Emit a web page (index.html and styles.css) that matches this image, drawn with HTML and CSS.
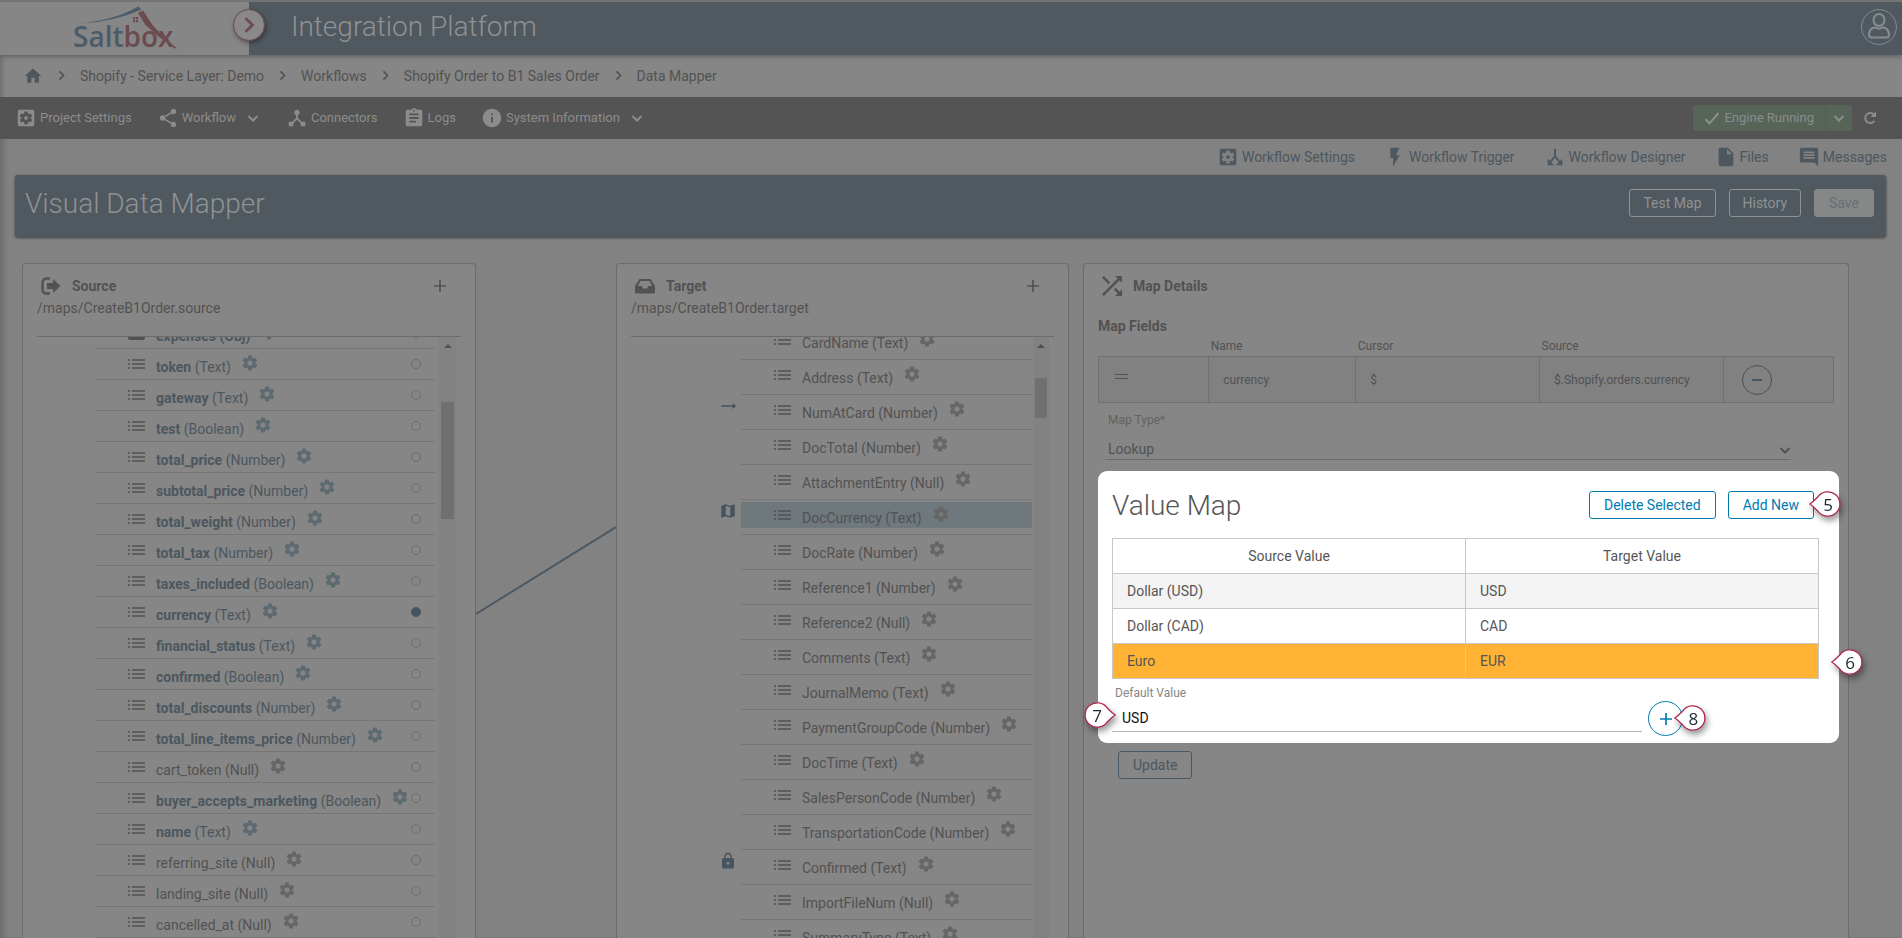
FILE: index.html
```html
<!DOCTYPE html>
<html lang="en">
<head>
    <meta charset="UTF-8">
    <meta name="viewport" content="width=device-width, initial-scale=1.0">
    <title>Saltbox - Visual Data Mapper</title>
    <link rel="stylesheet" href="styles.css">
</head>
<body>
    <!-- icon sprite -->
    <svg class="sprite" aria-hidden="true">
        <symbol id="home" viewBox="0 0 24 24"><path d="M10 20v-6h4v6h5v-8h3L12 3 2 12h3v8z"/></symbol>
        <symbol id="right" viewBox="0 0 16 16"><path d="M5.500 3l5 5-5 5" fill="none" stroke="currentColor" stroke-width="2"/></symbol>
        <symbol id="down" viewBox="0 0 16 16"><path d="M3.500 6L8 10.500 12.500 6" fill="none" stroke="currentColor" stroke-width="2"/></symbol>
        <symbol id="settings-box" viewBox="0 0 24 24"><path d="M12 10c-1.100 0-2 .9-2 2s.9 2 2 2 2-.9 2-2-.9-2-2-2zm7-7H5c-1.110 0-2 .9-2 2v14c0 1.100.89 2 2 2h14c1.110 0 2-.9 2-2V5c0-1.100-.89-2-2-2zm-1.750 9c0 .23-.02.46-.05.68l1.480 1.160c.13.11.17.3.08.45l-1.400 2.420c-.09.15-.27.21-.43.15l-1.740-.7c-.36.28-.76.51-1.180.69l-.26 1.850c-.03.17-.18.3-.35.3h-2.800c-.17 0-.32-.13-.35-.29l-.26-1.850c-.43-.18-.82-.41-1.180-.69l-1.740.7c-.16.06-.34 0-.43-.15l-1.400-2.420c-.09-.15-.05-.34.08-.45l1.480-1.160c-.03-.23-.05-.46-.05-.69 0-.23.02-.46.05-.68l-1.480-1.160c-.13-.11-.17-.3-.08-.45l1.400-2.420c.09-.15.27-.21.43-.15l1.740.7c.36-.28.76-.51 1.180-.69l.26-1.850c.03-.17.18-.3.35-.3h2.800c.17 0 .32.13.35.29l.26 1.850c.43.18.82.41 1.180.69l1.740-.7c.16-.06.34 0 .43.15l1.400 2.420c.09.15.05.34-.08.45l-1.480 1.160c.03.23.05.46.05.69z"/></symbol>
        <symbol id="share" viewBox="0 0 24 24"><path d="M18 16.080c-.76 0-1.440.3-1.960.77L8.910 12.700c.05-.23.09-.46.09-.7s-.04-.47-.09-.7l7.050-4.110c.54.5 1.250.81 2.040.81 1.660 0 3-1.340 3-3s-1.340-3-3-3-3 1.340-3 3c0 .24.04.47.09.7L8.040 9.810C7.500 9.310 6.790 9 6 9c-1.660 0-3 1.340-3 3s1.340 3 3 3c.79 0 1.500-.31 2.040-.81l7.120 4.160c-.05.21-.08.43-.08.65 0 1.610 1.310 2.920 2.920 2.920s2.920-1.310 2.920-2.920-1.310-2.920-2.920-2.920z"/></symbol>
        <symbol id="hub" viewBox="0 0 24 24"><path d="M17 16l-4-4V8.820C14.160 8.400 15 7.300 15 6c0-1.660-1.340-3-3-3S9 4.340 9 6c0 1.300.84 2.400 2 2.820V12l-4 4H3v5h5v-3.050l4-4.200 4 4.200V21h5v-5h-4z"/></symbol>
        <symbol id="clipboard" viewBox="0 0 24 24"><path d="M19 3h-4.180C14.400 1.840 13.300 1 12 1c-1.300 0-2.400.84-2.820 2H5c-1.100 0-2 .9-2 2v14c0 1.100.9 2 2 2h14c1.100 0 2-.9 2-2V5c0-1.100-.9-2-2-2zm-7 0c.55 0 1 .45 1 1s-.45 1-1 1-1-.45-1-1 .45-1 1-1zm2 14H7v-2h7v2zm3-4H7v-2h10v2zm0-4H7V7h10v2z"/></symbol>
        <symbol id="info" viewBox="0 0 24 24"><path d="M12 2C6.480 2 2 6.480 2 12s4.480 10 10 10 10-4.480 10-10S17.520 2 12 2zm1 15h-2v-6h2v6zm0-8h-2V7h2v2z"/></symbol>
        <symbol id="check" viewBox="0 0 16 16"><path d="M1.500 9l4 4.500L14.500 3" fill="none" stroke="currentColor" stroke-width="2"/></symbol>
        <symbol id="refresh" viewBox="0 0 16 16"><path d="M12.300 11A5 5 0 1 1 12 4.800" fill="none" stroke="currentColor" stroke-width="2"/><path d="M14 1.500v5.500H8.500z"/></symbol>
        <symbol id="flash" viewBox="0 0 24 24"><path d="M7 2v11h3v9l7-12h-4l4-8z"/></symbol>
        <symbol id="split" viewBox="0 0 24 24"><path d="M12 3v8L6 18.500M12 11l6 7.500" fill="none" stroke="currentColor" stroke-width="2"/><path d="M4 14v7h7zM20 14v7h-7z"/></symbol>
        <symbol id="file" viewBox="0 0 24 24"><path d="M6 2c-1.100 0-2 .9-2 2v16c0 1.100.9 2 2 2h12c1.100 0 2-.9 2-2V8l-6-6H6zm7 7V3.500L18.500 9H13z"/></symbol>
        <symbol id="message" viewBox="0 0 24 24"><path d="M22 4c0-1.100-.9-2-2-2H4c-1.100 0-2 .9-2 2v12c0 1.100.9 2 2 2h14l4 4V4zM18 14H6v-2h12v2zm0-3H6V9h12v2zm0-3H6V6h12v2z"/></symbol>
        <symbol id="user" viewBox="0 0 36 36"><g fill="none" stroke="currentColor"><circle cx="18" cy="18" r="17.400"/><g stroke-width="2"><ellipse cx="18" cy="11" rx="5.500" ry="6"/><path d="M11 19.500c2-1 3-1 3.500-.8 2 1.100 5 1.100 7 0 1-.4 2 0 3.500.8 2.300 1.500 3 4 3 6 0 1.800-.8 3-2.500 3h-15C8.800 28.500 8 27.300 8 25.500c0-2 .7-4.500 3-6z"/></g></g></symbol>
        <symbol id="sign-out" viewBox="0 0 20 18"><path d="M9 1.500H5.500a4 4 0 0 0-4 4v7a4 4 0 0 0 4 4H9" fill="none" stroke="currentColor" stroke-width="2.400"/><path d="M12 2l7.500 7-7.500 7v-4H6V6h6z"/></symbol>
        <symbol id="inbox" viewBox="0 0 20 16"><path d="M4.500 1h11L20 8v6q0 1.500-1.500 1.500h-17Q0 15.500 0 14V8zM5.500 3L2.800 8H6.500l1.500 2.500h4L13.500 8h3.700L14.500 3z"/></symbol>
        <symbol id="shuffle" viewBox="4 4 16 16"><path d="M10.590 9.170L5.410 4 4 5.410l5.170 5.170 1.420-1.410zM14.500 4l2.040 2.040L4 18.590 5.410 20 17.960 7.460 20 9.500V4h-5.500zm.33 9.410l-1.410 1.410 3.130 3.130L14.500 20H20v-5.500l-2.040 2.040-3.130-3.130z"/></symbol>
        <symbol id="plus" viewBox="0 0 14 14"><path d="M7 1v12M1 7h12" stroke="currentColor" stroke-width="1.700"/></symbol>
        <symbol id="minus" viewBox="0 0 14 14"><path d="M2 7h10" stroke="currentColor" stroke-width="2"/></symbol>
        <symbol id="list" viewBox="0 0 17 10"><path d="M0 1h2M0 5h2M0 9h2M4 1h13M4 5h13M4 9h13" stroke="currentColor" stroke-width="1.700"/></symbol>
        <symbol id="folder" viewBox="0 0 17 14"><path d="M0 2q0-2 2-2h4l2 2h7q2 0 2 2v8q0 2-2 2H2q-2 0-2-2z"/></symbol>
        <symbol id="gear" viewBox="0 0 24 24"><path d="M19.430 12.980c.04-.32.07-.64.07-.98s-.03-.66-.07-.98l2.110-1.650c.19-.15.24-.42.12-.64l-2-3.460c-.12-.22-.39-.3-.61-.22l-2.490 1c-.52-.4-1.080-.73-1.690-.98l-.38-2.650C14.460 2.180 14.250 2 14 2h-4c-.25 0-.46.18-.49.42l-.38 2.650c-.61.25-1.170.59-1.690.98l-2.490-1c-.23-.09-.49 0-.61.22l-2 3.460c-.13.22-.07.49.12.64l2.110 1.650c-.04.32-.07.65-.07.98s.03.66.07.98l-2.110 1.650c-.19.15-.24.42-.12.64l2 3.460c.12.22.39.3.61.22l2.490-1c.52.4 1.080.73 1.690.98l.38 2.650c.03.24.24.42.49.42h4c.25 0 .46-.18.49-.42l.38-2.650c.61-.25 1.170-.59 1.690-.98l2.490 1c.23.09.49 0 .61-.22l2-3.460c.12-.22.07-.49-.12-.64l-2.110-1.650zM12 15.500c-1.930 0-3.500-1.570-3.500-3.500s1.570-3.500 3.500-3.500 3.500 1.570 3.500 3.500-1.570 3.500-3.500 3.500z"/></symbol>
        <symbol id="arrow" viewBox="0 0 24 24"><path d="M23 12l-5-4v3H3v2h15v3z"/></symbol>
        <symbol id="map" viewBox="0 0 24 24"><path d="M20.500 3l-.16.03L15 5.100 9 3 3.360 4.900c-.21.07-.36.25-.36.48V20.500c0 .28.22.5.5.5l.16-.03L9 18.900l6 2.100 5.640-1.900c.21-.07.36-.25.36-.48V3.500c0-.28-.22-.5-.5-.5zM15 19l-6-2.110V5l6 2.110V19z"/></symbol>
        <symbol id="lock" viewBox="0 0 24 24"><path d="M18 8h-1V6c0-2.760-2.240-5-5-5S7 3.240 7 6v2H6c-1.100 0-2 .9-2 2v10c0 1.100.9 2 2 2h12c1.100 0 2-.9 2-2V10c0-1.100-.9-2-2-2zm-6 9c-1.100 0-2-.9-2-2s.9-2 2-2 2 .9 2 2-.9 2-2 2zm3.100-9H8.900V6c0-1.710 1.390-3.100 3.100-3.100 1.710 0 3.100 1.390 3.100 3.100v2z"/></symbol>
        <symbol id="pin" viewBox="0 0 32 26"><path d="M.8 13C4 11 6 9 8.500 6.300a12.200 12.200 0 1 1 0 13.400C6 17 4 15 .8 13z" fill="#fff" stroke="#b0294f" stroke-width="1.300"/></symbol>
    </svg>

    <header class="header">
        <div class="logo">
            <svg class="logo-art" viewBox="0 0 110 52" role="img" aria-label="Saltbox">
                <path class="logo-blue" d="M6 20.500C28 19 50 13 66 3.500l3.500 3C50 15 28 20 6 20.500z"/>
                <path class="logo-red" d="M66 10l5-2.500 9.500 14.500 11 12 13 11-2 .5-16-12L73.500 22z"/>
                <path class="logo-red" d="M61 14h2.200v2.200H61zM64 14h2.200v2.200H64zM61 17h2.200v2.200H61zM64 17h2.200v2.200H64z"/>
                <text x="1" y="44"><tspan class="logo-blue">Salt</tspan><tspan class="logo-red">box</tspan></text>
            </svg>
            <button class="expand-btn" aria-label="Expand menu"><svg><use href="#right"/></svg></button>
        </div>
        <div class="header-bar">
            <h1>Integration Platform</h1>
            <button class="user-btn" aria-label="Account"><svg><use href="#user"/></svg></button>
        </div>
    </header>

    <div class="page">
        <nav class="breadcrumb">
            <a href="#" aria-label="Home"><svg class="home"><use href="#home"/></svg></a>
            <svg class="sep"><use href="#right"/></svg>
            <a href="#">Shopify - Service Layer: Demo</a>
            <svg class="sep"><use href="#right"/></svg>
            <a href="#">Workflows</a>
            <svg class="sep"><use href="#right"/></svg>
            <a href="#">Shopify Order to B1 Sales Order</a>
            <svg class="sep"><use href="#right"/></svg>
            <a href="#">Data Mapper</a>
        </nav>

        <nav class="toolbar">
            <a href="#"><svg><use href="#settings-box"/></svg>Project Settings</a>
            <a href="#"><svg><use href="#share"/></svg>Workflow<svg class="caret"><use href="#down"/></svg></a>
            <a href="#"><svg><use href="#hub"/></svg>Connectors</a>
            <a href="#"><svg><use href="#clipboard"/></svg>Logs</a>
            <a href="#"><svg><use href="#info"/></svg>System Information<svg class="caret"><use href="#down"/></svg></a>
            <div class="engine">
                <button class="engine-main"><svg><use href="#check"/></svg>Engine Running</button>
                <button class="engine-more" aria-label="Engine options"><svg><use href="#down"/></svg></button>
            </div>
            <button class="refresh-btn" aria-label="Refresh"><svg><use href="#refresh"/></svg></button>
        </nav>

        <nav class="submenu">
            <a href="#"><svg><use href="#settings-box"/></svg>Workflow Settings</a>
            <a href="#"><svg><use href="#flash"/></svg>Workflow Trigger</a>
            <a href="#"><svg><use href="#split"/></svg>Workflow Designer</a>
            <a href="#"><svg><use href="#file"/></svg>Files</a>
            <a href="#"><svg><use href="#message"/></svg>Messages</a>
        </nav>

        <div class="title-bar">
            <h2>Visual Data Mapper</h2>
            <button class="btn btn-light">Test Map</button>
            <button class="btn btn-light">History</button>
            <button class="btn btn-save">Save</button>
        </div>

        <main class="mapper">
            <section class="panel source">
                <div class="panel-head">
                    <div class="panel-title">
                        <svg><use href="#sign-out"/></svg><h3>Source</h3>
                        <button class="add-btn" aria-label="Add source"><svg><use href="#plus"/></svg></button>
                    </div>
                    <p>/maps/CreateB1Order.source</p>
                </div>
                <div class="tree">
                    <ul>
                        <li><div class="node mapped"><i class="twisty"></i><svg class="folder"><use href="#folder"/></svg><span><b>expenses (Obj)</b></span><svg class="gear"><use href="#gear"/></svg><input type="radio" name="port" aria-label="expenses"></div></li>
                        <li><div class="node mapped"><svg class="list"><use href="#list"/></svg><span><b>token</b> (Text)</span><svg class="gear"><use href="#gear"/></svg><input type="radio" name="port" aria-label="token"></div></li>
                        <li><div class="node mapped"><svg class="list"><use href="#list"/></svg><span><b>gateway</b> (Text)</span><svg class="gear"><use href="#gear"/></svg><input type="radio" name="port" aria-label="gateway"></div></li>
                        <li><div class="node mapped"><svg class="list"><use href="#list"/></svg><span><b>test</b> (Boolean)</span><svg class="gear"><use href="#gear"/></svg><input type="radio" name="port" aria-label="test"></div></li>
                        <li><div class="node mapped"><svg class="list"><use href="#list"/></svg><span><b>total_price</b> (Number)</span><svg class="gear"><use href="#gear"/></svg><input type="radio" name="port" aria-label="total_price"></div></li>
                        <li><div class="node mapped"><svg class="list"><use href="#list"/></svg><span><b>subtotal_price</b> (Number)</span><svg class="gear"><use href="#gear"/></svg><input type="radio" name="port" aria-label="subtotal_price"></div></li>
                        <li><div class="node mapped"><svg class="list"><use href="#list"/></svg><span><b>total_weight</b> (Number)</span><svg class="gear"><use href="#gear"/></svg><input type="radio" name="port" aria-label="total_weight"></div></li>
                        <li><div class="node mapped"><svg class="list"><use href="#list"/></svg><span><b>total_tax</b> (Number)</span><svg class="gear"><use href="#gear"/></svg><input type="radio" name="port" aria-label="total_tax"></div></li>
                        <li><div class="node mapped"><svg class="list"><use href="#list"/></svg><span><b>taxes_included</b> (Boolean)</span><svg class="gear"><use href="#gear"/></svg><input type="radio" name="port" aria-label="taxes_included"></div></li>
                        <li><div class="node mapped"><svg class="list"><use href="#list"/></svg><span><b>currency</b> (Text)</span><svg class="gear"><use href="#gear"/></svg><input type="radio" name="port" aria-label="currency" checked></div></li>
                        <li><div class="node mapped"><svg class="list"><use href="#list"/></svg><span><b>financial_status</b> (Text)</span><svg class="gear"><use href="#gear"/></svg><input type="radio" name="port" aria-label="financial_status"></div></li>
                        <li><div class="node mapped"><svg class="list"><use href="#list"/></svg><span><b>confirmed</b> (Boolean)</span><svg class="gear"><use href="#gear"/></svg><input type="radio" name="port" aria-label="confirmed"></div></li>
                        <li><div class="node mapped"><svg class="list"><use href="#list"/></svg><span><b>total_discounts</b> (Number)</span><svg class="gear"><use href="#gear"/></svg><input type="radio" name="port" aria-label="total_discounts"></div></li>
                        <li><div class="node mapped"><svg class="list"><use href="#list"/></svg><span><b>total_line_items_price</b> (Number)</span><svg class="gear"><use href="#gear"/></svg><input type="radio" name="port" aria-label="total_line_items_price"></div></li>
                        <li><div class="node"><svg class="list"><use href="#list"/></svg><span>cart_token (Null)</span><svg class="gear"><use href="#gear"/></svg><input type="radio" name="port" aria-label="cart_token"></div></li>
                        <li><div class="node mapped"><svg class="list"><use href="#list"/></svg><span><b>buyer_accepts_marketing</b> (Boolean)</span><svg class="gear"><use href="#gear"/></svg><input type="radio" name="port" aria-label="buyer_accepts_marketing"></div></li>
                        <li><div class="node mapped"><svg class="list"><use href="#list"/></svg><span><b>name</b> (Text)</span><svg class="gear"><use href="#gear"/></svg><input type="radio" name="port" aria-label="name"></div></li>
                        <li><div class="node"><svg class="list"><use href="#list"/></svg><span>referring_site (Null)</span><svg class="gear"><use href="#gear"/></svg><input type="radio" name="port" aria-label="referring_site"></div></li>
                        <li><div class="node"><svg class="list"><use href="#list"/></svg><span>landing_site (Null)</span><svg class="gear"><use href="#gear"/></svg><input type="radio" name="port" aria-label="landing_site"></div></li>
                        <li><div class="node"><svg class="list"><use href="#list"/></svg><span>cancelled_at (Null)</span><svg class="gear"><use href="#gear"/></svg><input type="radio" name="port" aria-label="cancelled_at"></div></li>
                    </ul>
                    <div class="scrollbar"><i class="scroll-up"></i><div class="thumb"></div></div>
                </div>
            </section>

            <!-- line from currency to DocCurrency -->
            <svg class="connector" viewBox="0 0 140 360" preserveAspectRatio="none"><path d="M0 351L140 264"/></svg>

            <section class="panel target">
                <div class="panel-head">
                    <div class="panel-title">
                        <svg><use href="#inbox"/></svg><h3>Target</h3>
                        <button class="add-btn" aria-label="Add target"><svg><use href="#plus"/></svg></button>
                    </div>
                    <p>/maps/CreateB1Order.target</p>
                </div>
                <div class="tree">
                    <ul>
                        <li><div class="node"><svg class="list"><use href="#list"/></svg><span>CardName (Text)</span><svg class="gear"><use href="#gear"/></svg></div></li>
                        <li><div class="node"><svg class="list"><use href="#list"/></svg><span>Address (Text)</span><svg class="gear"><use href="#gear"/></svg></div></li>
                        <li><svg class="kind"><use href="#arrow"/></svg><div class="node"><svg class="list"><use href="#list"/></svg><span>NumAtCard (Number)</span><svg class="gear"><use href="#gear"/></svg></div></li>
                        <li><div class="node"><svg class="list"><use href="#list"/></svg><span>DocTotal (Number)</span><svg class="gear"><use href="#gear"/></svg></div></li>
                        <li><div class="node"><svg class="list"><use href="#list"/></svg><span>AttachmentEntry (Null)</span><svg class="gear"><use href="#gear"/></svg></div></li>
                        <li><svg class="kind"><use href="#map"/></svg><div class="node selected"><svg class="list"><use href="#list"/></svg><span>DocCurrency (Text)</span><svg class="gear"><use href="#gear"/></svg></div></li>
                        <li><div class="node"><svg class="list"><use href="#list"/></svg><span>DocRate (Number)</span><svg class="gear"><use href="#gear"/></svg></div></li>
                        <li><div class="node"><svg class="list"><use href="#list"/></svg><span>Reference1 (Number)</span><svg class="gear"><use href="#gear"/></svg></div></li>
                        <li><div class="node"><svg class="list"><use href="#list"/></svg><span>Reference2 (Null)</span><svg class="gear"><use href="#gear"/></svg></div></li>
                        <li><div class="node"><svg class="list"><use href="#list"/></svg><span>Comments (Text)</span><svg class="gear"><use href="#gear"/></svg></div></li>
                        <li><div class="node"><svg class="list"><use href="#list"/></svg><span>JournalMemo (Text)</span><svg class="gear"><use href="#gear"/></svg></div></li>
                        <li><div class="node"><svg class="list"><use href="#list"/></svg><span>PaymentGroupCode (Number)</span><svg class="gear"><use href="#gear"/></svg></div></li>
                        <li><div class="node"><svg class="list"><use href="#list"/></svg><span>DocTime (Text)</span><svg class="gear"><use href="#gear"/></svg></div></li>
                        <li><div class="node"><svg class="list"><use href="#list"/></svg><span>SalesPersonCode (Number)</span><svg class="gear"><use href="#gear"/></svg></div></li>
                        <li><div class="node"><svg class="list"><use href="#list"/></svg><span>TransportationCode (Number)</span><svg class="gear"><use href="#gear"/></svg></div></li>
                        <li><svg class="kind"><use href="#lock"/></svg><div class="node"><svg class="list"><use href="#list"/></svg><span>Confirmed (Text)</span><svg class="gear"><use href="#gear"/></svg></div></li>
                        <li><div class="node"><svg class="list"><use href="#list"/></svg><span>ImportFileNum (Null)</span><svg class="gear"><use href="#gear"/></svg></div></li>
                        <li><div class="node"><svg class="list"><use href="#list"/></svg><span>SummaryType (Text)</span><svg class="gear"><use href="#gear"/></svg></div></li>
                    </ul>
                    <div class="scrollbar"><i class="scroll-up"></i><div class="thumb"></div></div>
                </div>
            </section>

            <section class="panel details">
                <div class="panel-title">
                    <svg><use href="#shuffle"/></svg><h3>Map Details</h3>
                </div>
                <h4>Map Fields</h4>
                <table class="fields">
                    <colgroup><col class="w15"><col class="w20"><col class="w25"><col class="w25"><col class="w15"></colgroup>
                    <thead>
                        <tr><th></th><th>Name</th><th>Cursor</th><th>Source</th><th></th></tr>
                    </thead>
                    <tbody>
                        <tr>
                            <td><i class="handle"></i></td>
                            <td>currency</td>
                            <td>$</td>
                            <td>$.Shopify.orders.currency</td>
                            <td><button class="round-btn remove-btn" aria-label="Remove field"><svg><use href="#minus"/></svg></button></td>
                        </tr>
                    </tbody>
                </table>

                <div class="map-type">
                    <label for="map-type">Map Type*</label>
                    <div class="select-wrap">
                        <select id="map-type"><option>Lookup</option></select>
                        <svg><use href="#down"/></svg>
                    </div>
                </div>

                <div class="value-map">
                    <div class="value-head">
                        <h2>Value Map</h2>
                        <button class="btn btn-blue">Delete Selected</button>
                        <button class="btn btn-blue">Add New</button>
                    </div>
                    <table class="values">
                        <thead>
                            <tr><th>Source Value</th><th>Target Value</th></tr>
                        </thead>
                        <tbody>
                            <tr class="odd"><td>Dollar (USD)</td><td>USD</td></tr>
                            <tr><td>Dollar (CAD)</td><td>CAD</td></tr>
                            <tr class="picked"><td>Euro</td><td>EUR</td></tr>
                        </tbody>
                    </table>
                    <label for="default-value">Default Value</label>
                    <div class="default-row">
                        <input type="text" id="default-value" value="USD">
                        <div class="add-wrap">
                            <button class="round-btn plus-btn" aria-label="Set default"><svg><use href="#plus"/></svg></button>
                            <div class="pin pin-8"><svg><use href="#pin"/></svg><span>8</span></div>
                        </div>
                    </div>
                    <div class="pin pin-5"><svg><use href="#pin"/></svg><span>5</span></div>
                    <div class="pin pin-6"><svg><use href="#pin"/></svg><span>6</span></div>
                    <div class="pin pin-7"><svg><use href="#pin"/></svg><span>7</span></div>
                </div>

                <button class="btn btn-update">Update</button>
            </section>
        </main>
    </div>
</body>
</html>
```

FILE: styles.css
```css
:root {
    --blue-dark: #505860;
    --blue-text: #4c575f;
    --page: #828282;
    --panel: #868686;
    --line: #6c6c6c;
    --text: #525252;
    --light: #8f9292;
    --accent: #007cb0;
}

* {
    margin: 0;
    padding: 0;
    box-sizing: border-box;
}

body {
    height: 100vh;
    display: flex;
    flex-direction: column;
    overflow: hidden;
    background-color: var(--page);
    color: var(--text);
    font-family: Roboto, "Liberation Sans", sans-serif;
    font-size: 14px;
    line-height: 20px;
}

a {
    color: inherit;
    text-decoration: none;
}

button,
input,
select {
    font: inherit;
    color: inherit;
    background: none;
    border: none;
}

svg {
    display: block;
    flex: none;
    fill: currentColor;
}

.sprite {
    position: absolute;
    width: 0;
    height: 0;
}

h1,
h2 {
    font-size: 28px;
    line-height: 30px;
    font-weight: 300;
}

h3,
h4 {
    font-size: 14px;
    font-weight: 700;
}

/* header */
.header {
    display: flex;
    height: 55px;
    border-top: 2px solid #747474;
    box-shadow: 0 1px 5px rgba(0, 0, 0, 0.35);
    position: relative;
    z-index: 2;
}

.logo {
    position: relative;
    width: 249px;
    background-color: var(--panel);
    padding: 1px 0 0 72px;
}

.logo-art {
    width: 110px;
    height: 52px;
}

.logo-art text {
    font-family: "Open Sans", sans-serif;
    font-size: 28px;
    font-weight: 600;
}

.logo-blue {
    fill: #4c5b68;
}

.logo-red {
    fill: #6b4a50;
}

.expand-btn {
    position: absolute;
    right: -16px;
    top: 7px;
    width: 32px;
    height: 32px;
    border: 1px solid #6b4a50;
    border-radius: 50%;
    background-color: #8a8888;
    color: #6b4a50;
    box-shadow: 1px 2px 4px rgba(0, 0, 0, 0.4);
    display: flex;
    align-items: center;
    justify-content: center;
}

.expand-btn svg {
    width: 22px;
    height: 22px;
}

.header-bar {
    flex: 1;
    display: flex;
    align-items: center;
    justify-content: space-between;
    padding: 0 5px 3px 42px;
    background-color: var(--blue-dark);
    color: var(--light);
}

.header-bar h1 {
    padding-bottom: 1px;
}

.user-btn {
    color: #858d91;
}

.user-btn svg {
    width: 36px;
    height: 36px;
}

.page {
    flex: 1;
    min-height: 0;
    display: flex;
    flex-direction: column;
    box-shadow: inset 6px 0 6px -3px rgba(0, 0, 0, 0.2);
}

/* breadcrumb */
.breadcrumb {
    display: flex;
    align-items: center;
    gap: 12px;
    height: 42px;
    padding: 0 23px 1px;
    background: linear-gradient(90deg, rgba(0, 0, 0, 0.15), transparent 6px), var(--panel);
}

.breadcrumb .home {
    width: 20px;
    height: 20px;
    color: var(--blue-text);
}

.breadcrumb .sep {
    width: 13px;
    height: 13px;
}

/* toolbar */
.toolbar {
    display: flex;
    align-items: center;
    gap: 25px;
    height: 42px;
    padding: 0 24px 0 15px;
    background-color: #545454;
    color: #8c8c8c;
    font-size: 13px;
}

.toolbar a,
.submenu a {
    display: flex;
    align-items: center;
    gap: 3px;
}

.toolbar a svg,
.submenu a svg {
    width: 22px;
    height: 22px;
}

.toolbar a .caret {
    width: 16px;
    height: 16px;
    margin-left: 6px;
}

.engine {
    display: flex;
    height: 26px;
    margin-left: auto;
    border-radius: 3px;
    background-color: #566557;
}

.engine button {
    display: flex;
    align-items: center;
    gap: 4px;
    padding: 0 11px;
}

.engine button svg,
.refresh-btn svg {
    width: 16px;
    height: 16px;
}

.engine .engine-more {
    padding: 0 5px;
    border-left: 1px solid #516052;
}

.refresh-btn {
    margin-left: -15px;
}

/* workflow links */
.submenu {
    display: flex;
    align-items: center;
    justify-content: flex-end;
    gap: 29px;
    height: 36px;
    padding-right: 15px;
    color: var(--blue-text);
}

/* title bar */
.title-bar {
    display: flex;
    gap: 13px;
    margin: 0 16px 0 15px;
    padding: 14px 12px 18px 10px;
    border-radius: 3px;
    background-color: var(--blue-dark);
    color: var(--light);
    box-shadow: 0 1px 3px rgba(0, 0, 0, 0.5);
}

.title-bar h2 {
    margin-right: auto;
}

.btn {
    height: 28px;
    padding: 0 14px;
    border: 1px solid currentColor;
    border-radius: 3px;
    line-height: 26px;
}

.btn-light {
    padding: 0 13px;
}

.btn-save {
    border-color: #868888;
    background-color: #868888;
    color: #666f75;
}

/* panels */
.mapper {
    flex: 1;
    min-height: 0;
    display: grid;
    grid-template-columns: 454fr 140fr 453fr 780fr;
    grid-template-rows: minmax(0, 1fr);
    padding: 26px 53px 0 22px;
}

.panel {
    min-width: 0;
    padding: 12px 14px 0;
    border: 1px solid var(--line);
    border-bottom: none;
    border-radius: 4px 4px 0 0;
    background-color: var(--panel);
}

.source,
.target {
    display: flex;
    flex-direction: column;
}

.panel-head {
    padding-bottom: 18px;
    border-bottom: 1px solid var(--line);
}

.panel-title {
    display: flex;
    align-items: center;
    height: 20px;
    padding-left: 4px;
    margin-bottom: 2px;
}

.panel-title > svg {
    width: 20px;
    height: 20px;
    margin-right: 11px;
}

.add-btn {
    margin-left: auto;
    margin-right: 14px;
}

.add-btn svg {
    width: 14px;
    height: 14px;
}

.connector {
    width: 100%;
    height: 360px;
}

.connector path {
    fill: none;
    stroke: #4a5863;
    stroke-width: 2;
}

.tree {
    flex: 1;
    min-height: 0;
    display: flex;
    overflow: hidden;
    padding-right: 5px;
}

.tree ul {
    flex: 1;
    list-style: none;
}

.source ul {
    margin: -19px 4px 0 0;
    padding-left: 58px;
}

.target ul {
    margin: -12px 1px 0 0;
    padding-left: 88px;
}

.tree li {
    display: flex;
    position: relative;
    padding: 2px 0;
    height: 31px;
}

.target li {
    height: 35px;
    padding-left: 22px;
}

/* separator under each node, starts after the kind icon */
.tree li::after {
    content: "";
    position: absolute;
    left: 0;
    right: 0;
    bottom: 0;
    border-bottom: 1px solid #767676;
}

.target li::after {
    left: 22px;
}

.kind {
    width: 18px;
    height: 18px;
    margin: 0 4px 0 -22px;
    color: #46545f;
}

.node {
    flex: 1;
    display: flex;
    align-items: center;
    height: 26px;
    padding: 0 14px 0 33px;
    white-space: nowrap;
}

.node span {
    padding-top: 6px;
}

.node.mapped span {
    color: var(--blue-text);
}

.node.selected {
    background-color: #6f787d;
}

.list,
.folder {
    width: 17px;
    height: 10px;
    margin-right: 11px;
}

.folder {
    height: 14px;
}

.twisty {
    width: 8px;
    margin: 0 16px 0 -24px;
    border: 4px solid transparent;
    border-top: 5px solid var(--text);
    border-bottom: none;
}

.gear {
    width: 18px;
    height: 18px;
    margin-left: 10px;
    margin-bottom: 2px;
    color: #666;
}

.mapped .gear {
    color: #5e6a71;
}

.node input {
    appearance: none;
    flex: none;
    width: 10px;
    height: 10px;
    margin-left: auto;
    border: 1px solid #6d6d6d;
    border-radius: 50%;
}

.node input:checked {
    border-color: #46545f;
    background-color: #46545f;
}

.scrollbar {
    width: 17px;
    padding: 7px 2px 0;
    background-color: #828282;
}

.scroll-up {
    display: block;
    width: 8px;
    margin: 0 auto;
    border: 4px solid transparent;
    border-top: none;
    border-bottom-color: #505050;
}

.thumb {
    height: 117px;
    margin-top: 54px;
    background-color: #707070;
}

.target .thumb {
    height: 40px;
    margin-top: 30px;
}

/* map details */
.details {
    margin-left: 14px;
}

h4 {
    margin-top: 20px;
}

table {
    width: 100%;
    table-layout: fixed;
    border-collapse: collapse;
}

.fields {
    font-size: 12px;
}

.w15 {
    width: 15%;
}

.w20 {
    width: 20%;
}

.w25 {
    width: 25%;
}

.fields th {
    height: 20px;
    padding-left: 2px;
    font-weight: 400;
    text-align: left;
}

.fields td {
    height: 46px;
    padding-left: 14px;
    border: 1px solid #707070;
    background-color: #818181;
}

.handle {
    display: block;
    width: 13px;
    height: 5px;
    margin: 0 0 6px 2px;
    border: 1px solid var(--text);
    border-width: 1px 0;
}

.round-btn {
    display: flex;
    align-items: center;
    justify-content: center;
    border: 1px solid currentColor;
    border-radius: 50%;
}

.round-btn svg {
    width: 14px;
    height: 14px;
}

.remove-btn {
    width: 30px;
    height: 30px;
    margin-left: 4px;
    color: #46545f;
}

.map-type {
    margin: 9px 43px 0 7px;
}

label {
    display: block;
    padding-left: 3px;
    font-size: 12px;
    line-height: 16px;
}

.map-type label {
    color: #626262;
}

.select-wrap {
    position: relative;
    margin-top: 10px;
}

.select-wrap select {
    appearance: none;
    display: block;
    width: 100%;
    height: 22px;
    padding-left: 3px;
    border-bottom: 1px solid var(--line);
}

.select-wrap svg {
    position: absolute;
    right: -2px;
    top: 4px;
    width: 16px;
    height: 16px;
    pointer-events: none;
}

/* value map card */
.value-map {
    position: relative;
    margin: 11px -5px 8px 0;
    padding: 20px 20px 7px 14px;
    border-radius: 9px;
    background-color: #fff;
    color: #565656;
}

.value-head {
    display: flex;
    gap: 12px;
    margin-bottom: 17px;
    padding-right: 5px;
}

.value-head h2 {
    margin-right: auto;
}

.btn-blue {
    border-color: var(--accent);
    color: var(--accent);
}

.values th,
.values td {
    height: 35px;
    border: 1px solid #c8c8c8;
}

.values th {
    font-weight: 400;
    text-align: center;
}

.values td {
    padding-left: 14px;
}

.values .odd {
    background-color: #f3f3f3;
}

.values .picked {
    background-color: #ffb233;
}

.value-map label {
    margin-top: 6px;
    color: #868686;
}

.default-row {
    display: flex;
    gap: 6px;
}

.default-row input {
    width: 75%;
    height: 31px;
    padding: 3px 0 0 10px;
    border-bottom: 1px solid #b8b8b8;
    color: #111;
}

.add-wrap {
    position: relative;
}

.plus-btn {
    width: 35px;
    height: 35px;
    color: var(--accent);
}

/* numbered callouts */
.pin {
    position: absolute;
    width: 32px;
    height: 26px;
    filter: drop-shadow(2px 4px 3px rgba(0, 0, 0, 0.4));
}

.pin svg {
    width: 32px;
    height: 26px;
}

.pin span {
    position: absolute;
    top: 0;
    left: 6px;
    width: 26px;
    color: #1b2b36;
    font-family: "Open Sans", sans-serif;
    font-size: 17px;
    line-height: 27px;
    text-align: center;
}

.pin-5 {
    top: 20px;
    right: -2px;
}

.pin-6 {
    top: 178px;
    right: -24px;
}

.pin-7 {
    top: 231px;
    left: -14px;
}

.pin-7 svg {
    transform: scaleX(-1);
}

.pin-7 span {
    left: 0;
}

.pin-8 {
    top: 4px;
    left: 26px;
}

.btn-update {
    margin-left: 20px;
    border-color: #4a5863;
    color: var(--blue-text);
}
```
